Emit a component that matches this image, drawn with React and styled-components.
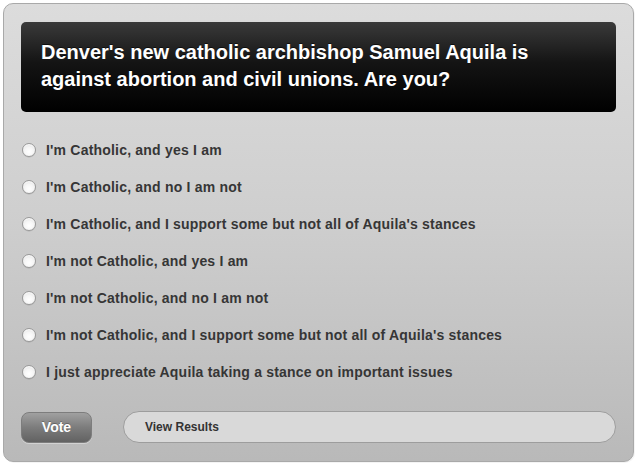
import styled, { createGlobalStyle } from "styled-components";

const GlobalStyle = createGlobalStyle`
  html, body {
    margin: 0;
    padding: 0;
    background: #ffffff;
  }
  body {
    font-family: "Liberation Sans", Arial, Helvetica, sans-serif;
  }
`;

const options = [
  "I'm Catholic, and yes I am",
  "I'm Catholic, and no I am not",
  "I'm Catholic, and I support some but not all of Aquila's stances",
  "I'm not Catholic, and yes I am",
  "I'm not Catholic, and no I am not",
  "I'm not Catholic, and I support some but not all of Aquila's stances",
  "I just appreciate Aquila taking a stance on important issues",
];

const Panel = styled.div`
  box-sizing: border-box;
  margin: 3px;
  width: 631px;
  height: 459px;
  padding: 18px 17px 18px 17px;
  border: 1px solid #a9a9a9;
  border-radius: 10px;
  background: linear-gradient(to bottom, #dcdcdc 0%, #cfcfcf 45%, #b9b9b9 100%);
  box-shadow: 1px 1px 0 #f4f4f4;
  display: flex;
  flex-direction: column;
`;

const Question = styled.div`
  box-sizing: border-box;
  height: 90px;
  padding: 0 20px 2px;
  border-radius: 5px;
  background: linear-gradient(to bottom, #3a3a3a 0%, #141414 45%, #000000 100%);
  display: flex;
  align-items: center;
  color: #ffffff;
  font-size: 20px;
  font-weight: bold;
  line-height: 27px;
  text-shadow: 0 -1px 0 rgba(0, 0, 0, 0.6);
`;

const OptionList = styled.div`
  margin-top: 19px;
  display: flex;
  flex-direction: column;
`;

const OptionRow = styled.label`
  height: 37px;
  display: flex;
  align-items: center;
  gap: 10px;
  padding-left: 1px;
  font-size: 14px;
  letter-spacing: 0.2px;
  font-weight: bold;
  color: #363636;
  cursor: pointer;
`;

const Radio = styled.span`
  box-sizing: border-box;
  width: 14px;
  height: 14px;
  border-radius: 50%;
  border: 1px solid #9a9a9a;
  background: radial-gradient(circle at 50% 65%, #ffffff 0%, #f6f6f6 45%, #dadada 100%);
  box-shadow: inset 0 1px 1px rgba(255, 255, 255, 0.9), 0 0.5px 0.5px rgba(0, 0, 0, 0.15);
  flex-shrink: 0;
`;

const ButtonRow = styled.div`
  margin-top: auto;
  display: flex;
  align-items: center;
  gap: 31px;
`;

const VoteButton = styled.button`
  box-sizing: border-box;
  width: 71px;
  height: 31px;
  border: 1px solid #7d7d7d;
  border-radius: 8px;
  background: linear-gradient(to bottom, #a0a0a0 0%, #7c7c7c 50%, #626262 100%);
  color: #ffffff;
  font-family: "Liberation Sans", Arial, sans-serif;
  font-size: 14px;
  font-weight: bold;
  text-shadow: 0 -1px 0 rgba(0, 0, 0, 0.25);
  box-shadow: 0 1px 0 rgba(255, 255, 255, 0.35);
  cursor: pointer;
`;

const ResultsButton = styled.button`
  box-sizing: border-box;
  flex: 1;
  height: 32px;
  padding: 0 0 0 21px;
  border: 1px solid #9d9d9d;
  border-radius: 16px;
  background: #d9d9d9;
  text-align: left;
  color: #333333;
  font-family: "Liberation Sans", Arial, sans-serif;
  font-size: 12px;
  font-weight: bold;
  cursor: pointer;
`;

export default function App() {
  return (
    <>
      <GlobalStyle />
      <Panel>
        <Question>
          Denver's new catholic archbishop Samuel Aquila is
          <br />
          against abortion and civil unions. Are you?
        </Question>
        <OptionList>
          {options.map((text) => (
            <OptionRow key={text}>
              <Radio />
              {text}
            </OptionRow>
          ))}
        </OptionList>
        <ButtonRow>
          <VoteButton>Vote</VoteButton>
          <ResultsButton>View Results</ResultsButton>
        </ButtonRow>
      </Panel>
    </>
  );
}
